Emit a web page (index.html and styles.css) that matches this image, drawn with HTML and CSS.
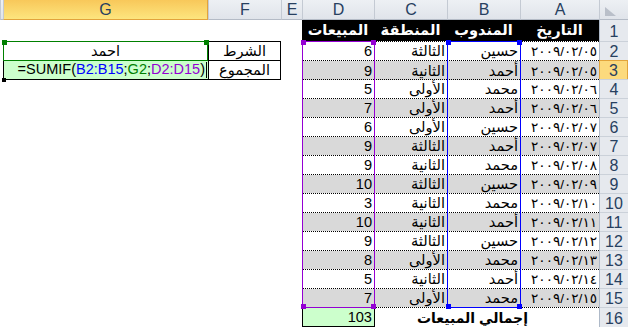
FILE: index.html
```html
<!DOCTYPE html>
<html lang="ar">
<head>
<meta charset="utf-8">
<title>SUMIF</title>
<link rel="stylesheet" href="styles.css">
</head>
<body>
<div class="sheet">
  <div class="row hdr">
    <div class="ch"></div>
    <div class="ch sel">G</div>
    <div class="ch">F</div>
    <div class="ch">E</div>
    <div class="ch">D</div>
    <div class="ch">C</div>
    <div class="ch">B</div>
    <div class="ch">A</div>
    <div class="ch corner"><span class="tri"></span></div>
  </div>
  <div class="row r1">
    <div></div><div></div><div></div><div></div>
    <div class="k">المبيعات</div><div class="k">المنطقة</div><div class="k">المندوب</div><div class="k">التاريخ</div>
    <div class="rh">1</div>
  </div>
  <div class="row">
    <div></div><div class="crit">احمد</div><div class="lbl lt">الشرط</div><div></div>
    <div class="d num">6</div><div class="d reg">الثالثة</div><div class="d name">حسين</div><div class="d date">٢٠٠٩/٠٢/٠٥</div>
    <div class="rh">2</div>
  </div>
  <div class="row alt">
    <div></div><div class="edit"><span class="fx"><span>=SUMIF(</span><span class="cb">B2:B15</span>;<span class="cg">G2</span>;<span class="cp">D2:D15</span>)</span><span class="caret"></span></div><div class="lbl lb">المجموع</div><div></div>
    <div class="d num">9</div><div class="d reg">الثانية</div><div class="d name">أحمد</div><div class="d date">٢٠٠٩/٠٢/٠٥</div>
    <div class="rh cur">3</div>
  </div>
  <div class="row">
    <div></div><div></div><div></div><div></div>
    <div class="d num">5</div><div class="d reg">الأولى</div><div class="d name">محمد</div><div class="d date">٢٠٠٩/٠٢/٠٦</div>
    <div class="rh">4</div>
  </div>
  <div class="row alt">
    <div></div><div></div><div></div><div></div>
    <div class="d num">7</div><div class="d reg">الأولى</div><div class="d name">أحمد</div><div class="d date">٢٠٠٩/٠٢/٠٦</div>
    <div class="rh">5</div>
  </div>
  <div class="row">
    <div></div><div></div><div></div><div></div>
    <div class="d num">6</div><div class="d reg">الأولى</div><div class="d name">حسين</div><div class="d date">٢٠٠٩/٠٢/٠٧</div>
    <div class="rh">6</div>
  </div>
  <div class="row alt">
    <div></div><div></div><div></div><div></div>
    <div class="d num">9</div><div class="d reg">الثالثة</div><div class="d name">أحمد</div><div class="d date">٢٠٠٩/٠٢/٠٧</div>
    <div class="rh">7</div>
  </div>
  <div class="row">
    <div></div><div></div><div></div><div></div>
    <div class="d num">9</div><div class="d reg">الثانية</div><div class="d name">محمد</div><div class="d date">٢٠٠٩/٠٢/٠٨</div>
    <div class="rh">8</div>
  </div>
  <div class="row alt">
    <div></div><div></div><div></div><div></div>
    <div class="d num">10</div><div class="d reg">الثالثة</div><div class="d name">حسين</div><div class="d date">٢٠٠٩/٠٢/٠٩</div>
    <div class="rh">9</div>
  </div>
  <div class="row">
    <div></div><div></div><div></div><div></div>
    <div class="d num">3</div><div class="d reg">الثانية</div><div class="d name">محمد</div><div class="d date">٢٠٠٩/٠٢/١٠</div>
    <div class="rh">10</div>
  </div>
  <div class="row alt">
    <div></div><div></div><div></div><div></div>
    <div class="d num">10</div><div class="d reg">الثانية</div><div class="d name">أحمد</div><div class="d date">٢٠٠٩/٠٢/١١</div>
    <div class="rh">11</div>
  </div>
  <div class="row">
    <div></div><div></div><div></div><div></div>
    <div class="d num">9</div><div class="d reg">الثالثة</div><div class="d name">حسين</div><div class="d date">٢٠٠٩/٠٢/١٢</div>
    <div class="rh">12</div>
  </div>
  <div class="row alt">
    <div></div><div></div><div></div><div></div>
    <div class="d num">8</div><div class="d reg">الأولى</div><div class="d name">محمد</div><div class="d date">٢٠٠٩/٠٢/١٣</div>
    <div class="rh">13</div>
  </div>
  <div class="row">
    <div></div><div></div><div></div><div></div>
    <div class="d num">5</div><div class="d reg">الثانية</div><div class="d name">أحمد</div><div class="d date">٢٠٠٩/٠٢/١٤</div>
    <div class="rh">14</div>
  </div>
  <div class="row alt">
    <div></div><div></div><div></div><div></div>
    <div class="d num">7</div><div class="d reg">الأولى</div><div class="d name">محمد</div><div class="d date">٢٠٠٩/٠٢/١٥</div>
    <div class="rh">15</div>
  </div>
  <div class="row">
    <div></div><div></div><div></div><div></div>
    <div class="total">103</div><div class="d"></div><div class="d sum">إجمالي المبيعات</div>
    <div class="rh">16</div>
  </div>

  <div class="rng rng-d"><i class="hd tl"></i><i class="hd tr"></i><i class="hd bl"></i><i class="hd br"></i></div>
  <div class="rng rng-b"><i class="hd tl"></i><i class="hd tr"></i><i class="hd bl"></i><i class="hd br"></i></div>
  <div class="rng rng-g"><i class="hd tl"></i><i class="hd tr"></i></div>
  <div class="fill-handle"></div>
</div>
</body>
</html>
```
FILE: styles.css
```css
* { box-sizing: border-box; }
html, body { margin: 0; padding: 0; background: #fff; }
body {
  width: 628px;
  height: 328px;
  overflow: hidden;
  font-family: "Liberation Sans", "DejaVu Sans", sans-serif;
  font-size: 14.6px;
  color: #000;
}
.sheet { position: relative; width: 628px; }

.row {
  display: grid;
  grid-template-columns: 3px 205px 73px 21px 72px 73px 73px 79px 29px;
  height: 19px;
}
.hdr { height: 20px; }
.r1 { height: 21px; }

.row > div {
  display: flex;
  align-items: flex-end;
  justify-content: flex-end;
  white-space: nowrap;
  line-height: 17px;
  min-width: 0;
}

/* column headers */
.hdr > .ch {
  background: linear-gradient(#edf0f4, #e0e4ea);
  border-bottom: 1px solid #b4bbc6;
  border-left: 1px solid #c4cad3;
  justify-content: center;
  align-items: center;
  color: #27405f;
  font-size: 16px;
  line-height: 18px;
  padding-top: 1px;
}
.hdr > .ch.sel {
  background: linear-gradient(#f8c85a, #fde57e);
  border-right: 1px solid #e2a33c;
  border-bottom: 1px solid #e2a33c;
}
.hdr > .corner { align-items: flex-end; justify-content: flex-start; padding: 0 0 3px 5px; }
.tri {
  width: 0; height: 0;
  border-top: 9px solid transparent;
  border-left: 11px solid #b9bfc9;
}

/* row headers */
.row > .rh {
  background: #e6e9ee;
  border-left: 1px solid #aeb9c8;
  border-top: 1px solid #cbd1d9;
  justify-content: center;
  align-items: center;
  color: #27405f;
  font-size: 16px;
  padding-top: 1px;
}
.r1 > .rh { border-top: 0; }
.row > .rh.cur { background: #fcda7d; border: 1px solid #e2a43b; }

/* title row */
.row > .k {
  background: #000;
  color: #fff;
  font-weight: bold;
  justify-content: center;
  align-items: center;
  font-size: 14.6px;
  padding-bottom: 1px;
}

/* data cells */
.row > .d {
  border-top: 1px dotted #000;
  background-clip: padding-box;
  padding-right: 2px;
}
.alt > .d { background-color: #d9d9d9; }
.date { font-size: 13.6px; letter-spacing: 0.2px; }
.row > .sum {
  grid-column: span 2;
  font-weight: bold;
  padding-right: 71px;
  font-size: 14px;
}

.row > .total {
  background: #ccffcc;
  border: 1px solid #000;
  width: 73px;
  height: 20px;
  padding-right: 2px;
}

/* criteria block */
.row > .crit { justify-content: center; }
.row > .lbl {
  justify-content: center;
  border: 1px solid #000;
}
.row > .lbl.lt { border-bottom: 0; }
.row > .lbl.lb { height: 20px; }

.row > .edit {
  background: #ccffcc;
  border-left: 1px solid #000;
  border-bottom: 1px solid #000;
  height: 20px;
  padding-right: 1px;
  align-items: center;
}
.fx { direction: ltr; font-size: 14.5px; line-height: 17px; }
.cb { color: #0000ff; }
.cg { color: #008000; }
.cp { color: #9400d3; }
.caret { width: 1px; height: 16px; background: #000; margin-left: 1px; }

/* reference range highlights (overlay) */
.rng { position: absolute; border: 1px solid; }
.rng-d { left: 302px; top: 41px; width: 73px; height: 267px; border-color: #9400d3; color: #9400d3; }
.rng-b { left: 447px; top: 41px; width: 74px; height: 267px; border-color: #0000ff; color: #0000ff; }
.rng-g { left: 3px; top: 41px; width: 205px; height: 20px; border-color: #008000; color: #008000; }
.hd { position: absolute; width: 5px; height: 5px; background: currentColor; }
.tl { left: -2px; top: -2px; }
.tr { right: -2px; top: -2px; }
.bl { left: -2px; bottom: -2px; }
.br { right: -2px; bottom: -2px; }

.fill-handle { position: absolute; left: 2px; top: 78px; width: 4px; height: 4px; background: #000; }
```
